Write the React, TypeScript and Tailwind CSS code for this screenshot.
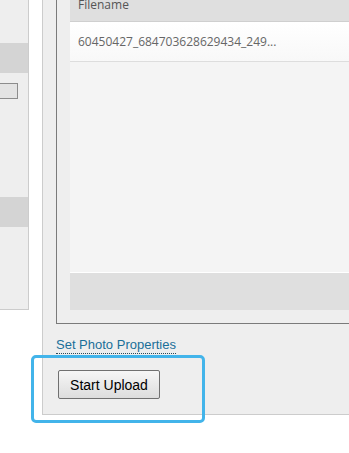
import React from "react";

export default function App() {
  return (
    <div className="relative w-[349px] h-[453px] overflow-hidden bg-white flex items-start" style={{ fontFamily: "Arial, 'Liberation Sans', sans-serif" }}>
      {/* Left panel */}
      <div className="w-[29px] h-[310px] shrink-0 bg-[#eeeeee] border-r border-b border-[#cccccc] flex flex-col pt-[43px]">
        <div className="h-[30px] bg-[#d4d4d4]" />
        <div className="mt-[10px] h-[16px] w-[18px] border border-l-0 border-[#8c8c8c] bg-[#e3e3e3]" />
        <div className="mt-[98px] h-[30px] bg-[#d4d4d4]" />
      </div>

      {/* Outer panel */}
      <div className="ml-[13px] flex-1 -mt-[12px] bg-[#eeeeee] border-l border-b border-[#cccccc] pl-[13px] pb-[15px] flex flex-col">
        {/* Inner panel */}
        <div className="border-l border-b border-[#7a7a7a] pl-[13px] pb-[13px]">
          <div className="flex flex-col" style={{ fontFamily: "'Open Sans', sans-serif" }}>
            <div className="h-[34px] bg-[#dfdfdf] border-b border-[#cfcfcf] flex items-center pl-[8px] text-[12px] text-[#555555]">
              Filename
            </div>
            <div className="h-[40px] bg-gradient-to-b from-white to-[#f8f8f8] border-b border-[#dddddd] flex items-center pl-[8px] text-[12px] text-[#666666] whitespace-nowrap">
              60450427_684703628629434_249...
            </div>
            <div className="h-[210px] bg-[#f4f4f4]" />
            <div className="h-[38px] bg-[#dfdfdf] border-t border-white" />
          </div>
        </div>
        <div className="mt-[13px] flex">
          <span className="block text-[13px] leading-[16px] text-[#1a6f99] border-b border-dotted border-[#2a4a5a]">
            Set Photo Properties
          </span>
        </div>
        <div className="mt-[16px] ml-[2px] flex">
          <button className="w-[102px] h-[29px] border border-[#707070] rounded-[2px] bg-gradient-to-b from-[#f6f6f6] to-[#dddddd] text-[14px] leading-[16px] text-black">
            Start Upload
          </button>
        </div>
      </div>

      {/* Focus annotation */}
      <div className="absolute left-[31px] top-[355px] w-[174px] h-[68px] border-[3px] border-[#42b4ea] rounded-[5px] pointer-events-none" />
    </div>
  );
}
